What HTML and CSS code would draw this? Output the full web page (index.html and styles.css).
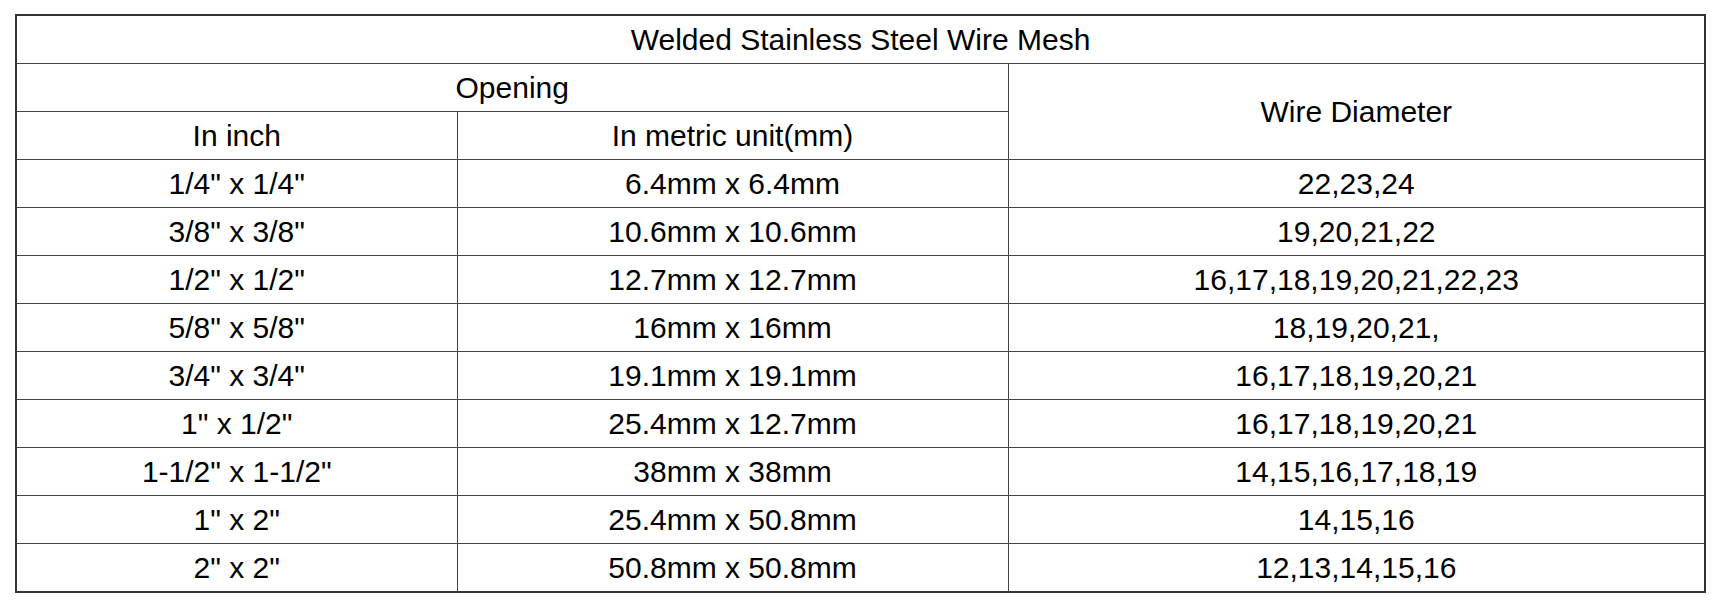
FILE: index.html
```html
<!DOCTYPE html>
<html>
<head>
<meta charset="utf-8">
<link rel="stylesheet" href="styles.css">
</head>
<body>
<table class="spec">
  <colgroup>
    <col class="c1">
    <col class="c2">
    <col class="c3">
  </colgroup>
  <tr><td colspan="3">Welded Stainless Steel Wire Mesh</td></tr>
  <tr><td colspan="2">Opening</td><td rowspan="2">Wire Diameter</td></tr>
  <tr><td>In inch</td><td>In metric unit(mm)</td></tr>
  <tr><td>1/4" x 1/4"</td><td>6.4mm x 6.4mm</td><td>22,23,24</td></tr>
  <tr><td>3/8" x 3/8"</td><td>10.6mm x 10.6mm</td><td>19,20,21,22</td></tr>
  <tr><td>1/2" x 1/2"</td><td>12.7mm x 12.7mm</td><td>16,17,18,19,20,21,22,23</td></tr>
  <tr><td>5/8" x 5/8"</td><td>16mm x 16mm</td><td>18,19,20,21,</td></tr>
  <tr><td>3/4" x 3/4"</td><td>19.1mm x 19.1mm</td><td>16,17,18,19,20,21</td></tr>
  <tr><td>1" x 1/2"</td><td>25.4mm x 12.7mm</td><td>16,17,18,19,20,21</td></tr>
  <tr><td>1-1/2" x 1-1/2"</td><td>38mm x 38mm</td><td>14,15,16,17,18,19</td></tr>
  <tr><td>1" x 2"</td><td>25.4mm x 50.8mm</td><td>14,15,16</td></tr>
  <tr><td>2" x 2"</td><td>50.8mm x 50.8mm</td><td>12,13,14,15,16</td></tr>
</table>
</body>
</html>
```
FILE: styles.css
```css
html, body {
  margin: 0;
  padding: 0;
  background: #ffffff;
}
body {
  padding: 14px 0 0 15px;
  font-family: "Liberation Sans", Arial, sans-serif;
  color: #000;
}
.spec {
  border-collapse: collapse;
  table-layout: fixed;
  width: 1689px;
  border: 2px solid #333;
  font-size: 30px;
}
.c1 { width: 441px; }
.c2 { width: 551px; }
.c3 { width: 697px; }
.spec td {
  border: 1px solid #444;
  height: 47px;
  padding: 0;
  text-align: center;
  vertical-align: middle;
  line-height: 34px;
}
```
